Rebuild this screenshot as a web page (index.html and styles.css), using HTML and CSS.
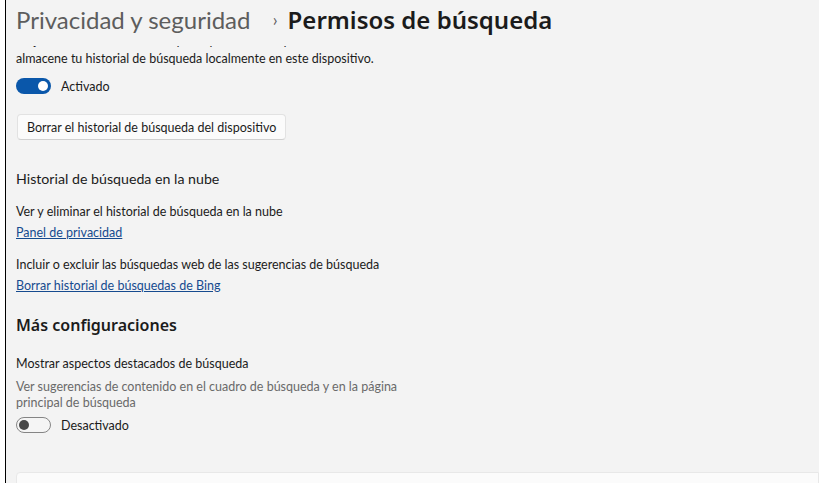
FILE: index.html
```html
<!DOCTYPE html>
<html lang="es">
<head>
    <meta charset="UTF-8">
    <meta name="viewport" content="width=device-width, initial-scale=1.0">
    <title>Permisos de búsqueda</title>
    <link rel="stylesheet" href="styles.css">
</head>
<body>
    <div class="window">
        <h1 class="breadcrumb">
            <span class="crumb-parent">Privacidad y seguridad</span>
            <span class="crumb-sep">›</span>
            <span class="crumb-current">Permisos de búsqueda</span>
        </h1>

        <div class="content">
            <p class="text clipped">Mejora los resultados de búsqueda permitiendo que Windows</p>
            <p class="text first">almacene tu historial de búsqueda localmente en este dispositivo.</p>

            <div class="toggle-row">
                <span class="toggle on"><span class="knob"></span></span>
                <span class="toggle-label">Activado</span>
            </div>

            <button class="btn">Borrar el historial de búsqueda del dispositivo</button>

            <h3 class="subheading">Historial de búsqueda en la nube</h3>

            <p class="text">Ver y eliminar el historial de búsqueda en la nube</p>
            <a class="link" href="#">Panel de privacidad</a>

            <p class="text spaced">Incluir o excluir las búsquedas web de las sugerencias de búsqueda</p>
            <a class="link" href="#">Borrar historial de búsquedas de Bing</a>

            <h2 class="section-title">Más configuraciones</h2>

            <p class="text">Mostrar aspectos destacados de búsqueda</p>
            <p class="text muted">Ver sugerencias de contenido en el cuadro de búsqueda y en la página<br>principal de búsqueda</p>

            <div class="toggle-row off-row">
                <span class="toggle off"><span class="knob"></span></span>
                <span class="toggle-label">Desactivado</span>
            </div>

            <div class="card"></div>
        </div>
    </div>
</body>
</html>
```

FILE: styles.css
```css
html, body {
    margin: 0;
    height: 100%;
}
body {
    background-color: #ffffff;
    padding-left: 5px;
    font-family: Lato, "Noto Sans", sans-serif;
    color: #1b1b1b;
    box-sizing: border-box;
}
.window {
    height: 100%;
    background-color: #f3f3f3;
    border-left: 1px solid #000;
    overflow: hidden;
}
.breadcrumb {
    margin: 0;
    padding-left: 10px;
    height: 46px;
    font-size: 24px;
    line-height: 40px;
    font-weight: 400;
    white-space: nowrap;
}
.crumb-parent {
    color: #5d5d5d;
}
.crumb-sep {
    color: #5d5d5d;
    font-size: 17px;
    margin: 0 4px 0 16px;
    position: relative;
    top: -3px;
}
.crumb-current {
    color: #1b1b1b;
    font-family: "Noto Sans", Lato, sans-serif;
    font-weight: 600;
}
.content {
    padding-left: 10px;
    overflow: hidden;
}
.text {
    margin: 0;
    font-size: 12.5px;
    line-height: 16px;
    color: #1b1b1b;
}
.clipped {
    margin-top: -13px;
}
.first {
    margin-top: 2px;
}
.muted {
    color: #6a6a6a;
    margin-top: 7px;
}
.spaced {
    margin-top: 16px;
}
.toggle-row {
    display: flex;
    align-items: center;
    margin-top: 11px;
    height: 16px;
}
.toggle {
    width: 35px;
    height: 16px;
    border-radius: 8px;
    box-sizing: border-box;
    display: flex;
    align-items: center;
    padding: 0 3px;
}
.toggle.on {
    background-color: #0a57aa;
    justify-content: flex-end;
}
.toggle.off {
    border: 1px solid #858585;
    background-color: #f5f5f5;
    justify-content: flex-start;
    padding: 0 2px;
}
.knob {
    width: 10px;
    height: 10px;
    border-radius: 50%;
}
.toggle.on .knob {
    background-color: #ffffff;
}
.toggle.off .knob {
    background-color: #474747;
}
.toggle-label {
    margin-left: 10px;
    font-size: 12.5px;
}
.btn {
    display: block;
    margin: 20px 0 0 1px;
    height: 26px;
    padding: 0 9px;
    font-family: inherit;
    font-size: 12.5px;
    color: #1b1b1b;
    background-color: #fbfbfb;
    border: 1px solid #e2e2e2;
    border-bottom-color: #d0d0d0;
    border-radius: 4px;
}
.subheading {
    margin: 29px 0 0;
    font-size: 14.2px;
    line-height: 20px;
    font-weight: 400;
    color: #1b1b1b;
}
.subheading + .text {
    margin-top: 15px;
}
.link {
    display: block;
    margin-top: 5px;
    font-size: 12.5px;
    line-height: 16px;
    color: #164b8f;
    text-decoration: underline;
    width: max-content;
}
.section-title {
    margin: 19px 0 0;
    font-family: "Noto Sans", Lato, sans-serif;
    font-size: 16px;
    line-height: 24px;
    font-weight: 600;
    color: #1b1b1b;
}
.section-title + .text {
    margin-top: 19px;
}
.off-row {
    margin-top: 6px;
}
.card {
    margin-top: 39px;
    height: 40px;
    background-color: #fbfbfb;
    border: 1px solid #e8e8e8;
    border-radius: 4px 0 0 0;
}
```
